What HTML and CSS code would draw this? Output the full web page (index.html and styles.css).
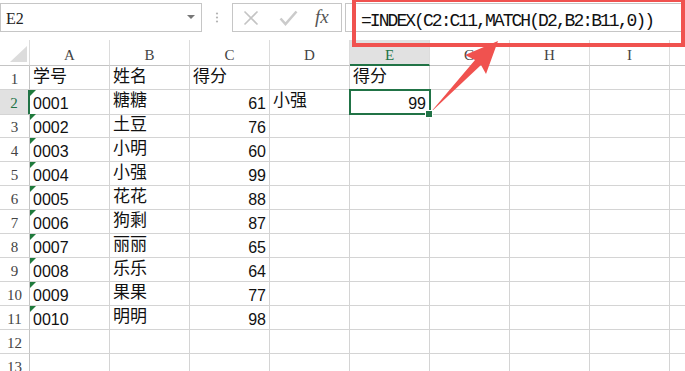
FILE: index.html
```html
<!DOCTYPE html>
<html lang="zh-CN">
<head>
    <meta charset="UTF-8">
    <title>INDEX MATCH</title>
    <link rel="stylesheet" href="styles.css">
</head>
<body>
    <div class="toolbar">
        <div class="namebox">
            <span class="cellref">E2</span>
            <span class="caret"></span>
        </div>
        <div class="grip">
            <svg width="30" height="29" viewBox="0 0 30 29">
                <circle cx="15" cy="10.5" r="1.1" fill="#b4b4b4"/>
                <circle cx="15" cy="14.5" r="1.1" fill="#b4b4b4"/>
                <circle cx="15" cy="18.5" r="1.1" fill="#b4b4b4"/>
            </svg>
        </div>
        <div class="buttons">
            <svg class="btn-cancel" width="16" height="16" viewBox="0 0 16 16">
                <path d="M1.5 1.5 L14.5 14.5 M14.5 1.5 L1.5 14.5" stroke="#c4c4c4" stroke-width="1.6" fill="none"/>
            </svg>
            <svg class="btn-enter" width="19" height="16" viewBox="0 0 19 16">
                <path d="M1.5 8.5 L6.5 14 L17.5 1.5" stroke="#cbcbcb" stroke-width="2.6" fill="none"/>
            </svg>
            <span class="fx">fx</span>
        </div>
        <div class="formula">=INDEX(C2:C11,MATCH(D2,B2:B11,0))</div>
    </div>

    <div class="sheet">
        <div class="row head">
            <div class="corner">
                <svg width="29" height="25" viewBox="0 0 29 25">
                    <polygon points="10,22 27,6 27,22" fill="#dcdcdc"/>
                </svg>
            </div>
            <div class="col">A</div>
            <div class="col">B</div>
            <div class="col">C</div>
            <div class="col">D</div>
            <div class="col active">E</div>
            <div class="col">G</div>
            <div class="col">H</div>
            <div class="col">I</div>
            <div class="col"></div>
        </div>
        <div class="row">
            <div class="num">1</div>
            <div class="cell zh">学号</div><div class="cell zh">姓名</div><div class="cell zh">得分</div><div class="cell"></div><div class="cell zh">得分</div>
            <div class="cell"></div><div class="cell"></div><div class="cell"></div><div class="cell"></div>
        </div>
        <div class="row">
            <div class="num active">2</div>
            <div class="cell txt">0001</div><div class="cell zh">糖糖</div><div class="cell val">61</div><div class="cell zh">小强</div>
            <div class="cell val selected">99<span class="handle"></span></div>
            <div class="cell"></div><div class="cell"></div><div class="cell"></div><div class="cell"></div>
        </div>
        <div class="row">
            <div class="num">3</div>
            <div class="cell txt">0002</div><div class="cell zh">土豆</div><div class="cell val">76</div><div class="cell"></div><div class="cell"></div>
            <div class="cell"></div><div class="cell"></div><div class="cell"></div><div class="cell"></div>
        </div>
        <div class="row">
            <div class="num">4</div>
            <div class="cell txt">0003</div><div class="cell zh">小明</div><div class="cell val">60</div><div class="cell"></div><div class="cell"></div>
            <div class="cell"></div><div class="cell"></div><div class="cell"></div><div class="cell"></div>
        </div>
        <div class="row">
            <div class="num">5</div>
            <div class="cell txt">0004</div><div class="cell zh">小强</div><div class="cell val">99</div><div class="cell"></div><div class="cell"></div>
            <div class="cell"></div><div class="cell"></div><div class="cell"></div><div class="cell"></div>
        </div>
        <div class="row">
            <div class="num">6</div>
            <div class="cell txt">0005</div><div class="cell zh">花花</div><div class="cell val">88</div><div class="cell"></div><div class="cell"></div>
            <div class="cell"></div><div class="cell"></div><div class="cell"></div><div class="cell"></div>
        </div>
        <div class="row">
            <div class="num">7</div>
            <div class="cell txt">0006</div><div class="cell zh">狗剩</div><div class="cell val">87</div><div class="cell"></div><div class="cell"></div>
            <div class="cell"></div><div class="cell"></div><div class="cell"></div><div class="cell"></div>
        </div>
        <div class="row">
            <div class="num">8</div>
            <div class="cell txt">0007</div><div class="cell zh">丽丽</div><div class="cell val">65</div><div class="cell"></div><div class="cell"></div>
            <div class="cell"></div><div class="cell"></div><div class="cell"></div><div class="cell"></div>
        </div>
        <div class="row">
            <div class="num">9</div>
            <div class="cell txt">0008</div><div class="cell zh">乐乐</div><div class="cell val">64</div><div class="cell"></div><div class="cell"></div>
            <div class="cell"></div><div class="cell"></div><div class="cell"></div><div class="cell"></div>
        </div>
        <div class="row">
            <div class="num">10</div>
            <div class="cell txt">0009</div><div class="cell zh">果果</div><div class="cell val">77</div><div class="cell"></div><div class="cell"></div>
            <div class="cell"></div><div class="cell"></div><div class="cell"></div><div class="cell"></div>
        </div>
        <div class="row">
            <div class="num">11</div>
            <div class="cell txt">0010</div><div class="cell zh">明明</div><div class="cell val">98</div><div class="cell"></div><div class="cell"></div>
            <div class="cell"></div><div class="cell"></div><div class="cell"></div><div class="cell"></div>
        </div>
        <div class="row">
            <div class="num">12</div>
            <div class="cell"></div><div class="cell"></div><div class="cell"></div><div class="cell"></div><div class="cell"></div>
            <div class="cell"></div><div class="cell"></div><div class="cell"></div><div class="cell"></div>
        </div>
        <div class="row">
            <div class="num">13</div>
            <div class="cell"></div><div class="cell"></div><div class="cell"></div><div class="cell"></div><div class="cell"></div>
            <div class="cell"></div><div class="cell"></div><div class="cell"></div><div class="cell"></div>
        </div>
    </div>

    <!-- annotation drawn over the screenshot -->
    <div class="callout"></div>
    <svg class="arrow" width="685" height="371" viewBox="0 0 685 371">
        <polygon points="430,113 475,60 465,55 498,41 486,74 481,65" fill="#f0524f"/>
    </svg>
</body>
</html>
```

FILE: styles.css
```css
body {
    margin: 0;
    width: 685px;
    height: 371px;
    overflow: hidden;
    background: #fff;
    position: relative;
    font-family: "Liberation Sans", "Noto Sans CJK SC", sans-serif;
    color: #111;
}

/* formula bar */
.toolbar {
    display: flex;
    align-items: flex-start;
    height: 40px;
    padding-top: 3px;
    box-sizing: border-box;
}

.namebox {
    width: 202px;
    height: 29px;
    border: 1px solid #c6c6c6;
    box-sizing: border-box;
    display: flex;
    justify-content: space-between;
    padding: 5px 6px 0 5px;
}

.cellref {
    font-family: "Liberation Serif", serif;
    font-size: 16px;
    line-height: 20px;
    color: #222;
}

.caret {
    width: 0;
    height: 0;
    margin-top: 6px;
    border-left: 4px solid transparent;
    border-right: 4px solid transparent;
    border-top: 4px solid #777;
}

.grip {
    width: 30px;
    height: 29px;
}

.buttons {
    width: 110px;
    height: 29px;
    border: 1px solid #c6c6c6;
    box-sizing: border-box;
    display: flex;
    align-items: flex-start;
    padding-left: 10px;
}

.btn-cancel {
    margin-top: 6px;
}

.btn-enter {
    margin-top: 6px;
    margin-left: 20px;
}

.fx {
    margin-left: 17px;
    margin-top: 3px;
    font-family: "Liberation Serif", serif;
    font-style: italic;
    font-size: 19px;
    line-height: 20px;
    color: #555;
}

.formula {
    flex: 1;
    margin-left: 3px;
    height: 29px;
    border: 1px solid #c6c6c6;
    border-right: none;
    box-sizing: border-box;
    padding: 7px 0 0 15px;
    font-family: "Liberation Mono", monospace;
    font-size: 18px;
    line-height: 20px;
    letter-spacing: -1.95px;
    color: #111;
    white-space: nowrap;
}

/* grid */
.row {
    display: grid;
    grid-template-columns: 30px repeat(9, 80px);
    height: 24px;
}

.row.head {
    height: 26px;
}

.row > div {
    box-sizing: border-box;
    border-right: 1px solid #d4d4d4;
    border-bottom: 1px solid #d4d4d4;
    white-space: nowrap;
    overflow: hidden;
}

.head > div {
    border-bottom-color: #c4c4c4;
    border-right-color: #dcdcdc;
}

.corner svg {
    display: block;
}

.col {
    text-align: center;
    font-family: "Liberation Serif", serif;
    font-size: 15px;
    line-height: 21px;
    padding-top: 5px;
    color: #444;
}

.col.active {
    background: #e1e1e1;
    color: #217346;
    border-bottom: 2px solid #217346 !important;
}

.num {
    text-align: center;
    font-family: "Liberation Serif", serif;
    font-size: 15px;
    line-height: 21px;
    padding-top: 3px;
    color: #444;
    border-right-color: #c4c4c4 !important;
}

.num.active {
    background: #e1e1e1;
    color: #217346;
    border-right: 2px solid #217346 !important;
}

.cell {
    font-size: 16px;
    line-height: 21px;
    padding: 3px 3px 0;
}

.cell.zh {
    font-size: 17px;
    padding-top: 0;
}

.cell.val {
    text-align: right;
}

.cell.txt {
    position: relative;
}

.cell.txt::before {
    content: "";
    position: absolute;
    top: 0;
    left: 0;
    border-top: 6px solid #1f7a3c;
    border-right: 6px solid transparent;
}

.row > .selected {
    position: relative;
    overflow: visible;
    z-index: 2;
}

.selected::after {
    content: "";
    position: absolute;
    top: -1px;
    left: -1px;
    right: -2px;
    bottom: -1px;
    border: 2px solid #217346;
}

.handle {
    position: absolute;
    right: -4px;
    bottom: -4px;
    width: 6px;
    height: 6px;
    background: #217346;
    border: 1px solid #fff;
    z-index: 3;
}

/* red annotation */
.callout {
    position: absolute;
    left: 352px;
    top: -2px;
    width: 333px;
    height: 49px;
    border: 4px solid #f0524f;
    box-sizing: border-box;
}

.arrow {
    position: absolute;
    left: 0;
    top: 0;
    pointer-events: none;
}
```
